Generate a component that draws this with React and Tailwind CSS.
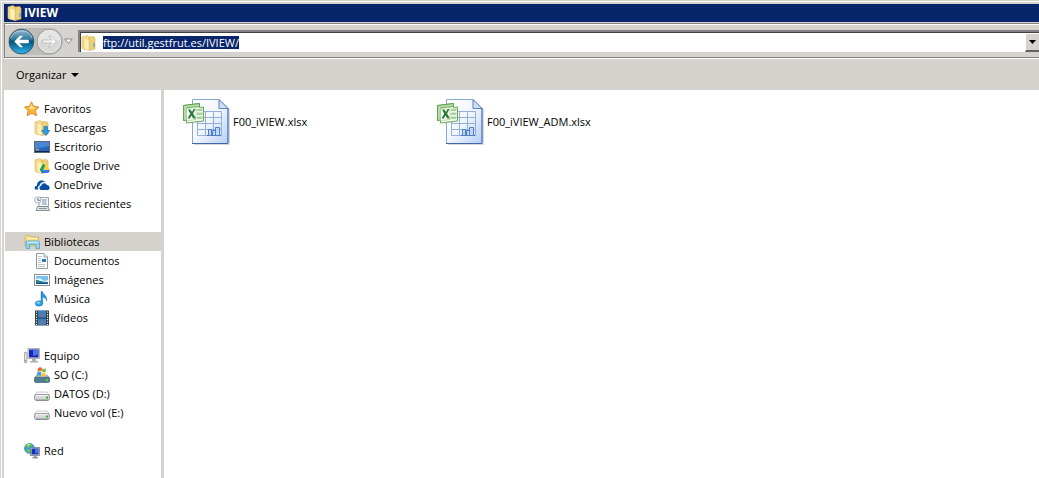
import React, { useEffect, useRef } from 'react'

const FolderShape = () => (
    <>
        <path d="M1 2 L6 .5 L8 2 V15 L2 14 L1 13Z" fill="#f5dd8b" stroke="#d6b966" strokeWidth=".6" />
        <path d="M8 2 L12.500 1.500 L14 3 V14 L8 15.500Z" fill="#ecd078" stroke="#cfae5a" strokeWidth=".6" />
        <path d="M3 3 L8 4.500 V15.500 L3 14Z" fill="#fff0b4" stroke="#dcc274" strokeWidth=".5" />
    </>
)

const FolderIcon = () => (
    <svg viewBox="0 0 16 16" className="h-4 w-4 shrink-0" aria-hidden="true">
        <FolderShape />
        <path d="M12.500 8h1v4h-1z" fill="#3b9be0" />
    </svg>
)

const DriveShape = () => (
    <>
        <path d="M3.500 6 H12.500 Q14 6 15.500 9.500 H.5 Q2 6 3.500 6Z" fill="#fafafa" stroke="#b5b5b5" strokeWidth=".7" />
        <rect x=".5" y="8.500" width="15" height="6" rx="2" fill="#d5d6d6" stroke="#85898a" strokeWidth=".8" />
        <path d="M2 9.700h12" stroke="#f7f7f7" />
        <path d="M2 14h12" stroke="#777b7c" strokeWidth=".8" />
        <rect x="12" y="10.500" width="2" height="2" fill="#2fb52f" />
    </>
)

const drawings = {
    star: (
        <>
            <path d="M7.500 .8 L9.700 5.300 L15 6 L11.300 9.700 L12.600 14.800 L7.800 12.300 L3.200 14.600 L4 9.500 L.6 5.900 L5.600 5.200Z" fill="#fdb338" stroke="#d98322" strokeWidth=".9" />
            <path d="M7.500 2.500 L8.800 6.200 L12 7 L8 8.500 L4 7 L6.300 6.100Z" fill="#ffe68c" />
        </>
    ),
    downloads: (
        <>
            <FolderShape />
            <path d="M10 6.500h3.500v4H16L11.800 15.500L7.500 10.500H10Z" fill="#2f9be4" stroke="#1668ad" strokeWidth=".6" />
        </>
    ),
    desktop: (
        <>
            <rect x=".5" y="2.500" width="15" height="11" fill="#2865bd" stroke="#5d6875" />
            <path d="M1 3h14v4L1 10z" fill="#4a86d6" />
            <path d="M1 12h14v1H1z" fill="#15254b" />
            <path d="M2 10h1.500v1.500H2z" fill="#ee8d35" />
            <path d="M3.500 10H5v1.500H3.500z" fill="#83cc52" />
        </>
    ),
    gdrive: (
        <>
            <FolderShape />
            <path d="M9 6h3L8 14.500L5.500 12Z" fill="#16a05d" />
            <path d="M10 6H12.500L16 12h-3Z" fill="#ffcd31" />
            <path d="M8.500 12H16l-1.500 3H7Z" fill="#3b76e8" />
        </>
    ),
    onedrive: (
        <>
            <path d="M1 12.500C0 10.500 1.200 8.700 3 8.500C3 5.500 5 3.500 7.700 3.500C9 3.400 10.200 4 11 5C8 4.500 6 6 5.500 8.500C3.500 9 3.200 11 4.500 12.500Z" fill="#0b4da2" />
            <path d="M6.500 13C4.500 11 5.500 9 7.200 9C7.300 5.800 11.500 5 13 8C15 8.300 16 10 15.500 11.500C15.200 12.500 14.500 13 13.500 13Z" fill="#0b4da2" />
        </>
    ),
    recent: (
        <>
            <path d="M5 1.500H14.500V10.500H5Z" fill="#f4f7f9" stroke="#8a949b" strokeWidth=".8" />
            <path d="M8 4h5M8 6h4M8 8h5" stroke="#7697b4" />
            <path d="M3.500 10.500H14L15.500 14.500H2Z" fill="#dce1e3" stroke="#737d82" strokeWidth=".8" />
            <path d="M5 12.500h8" stroke="#8d989e" />
            <circle cx="3.800" cy="4" r="3.200" fill="#f3f3f3" stroke="#9aa2a6" strokeWidth=".8" />
            <path d="M3.800 2v2.300H6" fill="none" stroke="#445" strokeWidth=".7" />
        </>
    ),
    library: (
        <>
            <path d="M1 3L2 1.500H6L7 3H14.500V12H1Z" fill="#f5dd83" stroke="#cfab4d" strokeWidth=".7" />
            <path d="M3 4.500h10.500" stroke="#fff5be" />
            <path d="M2 8Q2 7 3 7H14.500Q15.500 7 15.500 8V14.500H12V10.500H5.500V14.500H2Z" fill="#92d4f0" stroke="#4d9fc9" strokeWidth=".8" />
            <path d="M3 8.200h11.500" stroke="#d9f4fc" />
        </>
    ),
    documents: (
        <>
            <path d="M2.500 .5H10L13.500 4V15.500H2.500Z" fill="#fff" stroke="#858e94" strokeWidth=".9" />
            <path d="M10 .5V4h3.500" fill="#dce4e8" stroke="#858e94" strokeWidth=".7" />
            <path d="M4 3.500h4M4 5.500h3M4 7.500h3M4 9.500h3M4 11.500h7M4 13.500h7" stroke="#a9b6bf" strokeWidth=".8" />
            <path d="M8 6h4v3H8z" fill="#2878bc" />
        </>
    ),
    pictures: (
        <>
            <rect x=".5" y="2.500" width="15" height="11" fill="#fff" stroke="#8b8f91" />
            <path d="M2 4h12v8H2z" fill="#77bfec" />
            <path d="M2 7l4-1l4 3l4-1v4H2z" fill="#dff2f2" />
            <path d="M2 8c3 0 5 2 12 2v2H2z" fill="#257c87" />
            <path d="M2 11h12v1H2z" fill="#1b4f9a" />
        </>
    ),
    music: (
        <>
            <path d="M7 .5H8.500C9 4 14 4.500 12.500 10C12 7.500 10.500 6.500 8.700 6V12.500H7Z" fill="#2b91db" stroke="#1971b3" strokeWidth=".4" />
            <ellipse cx="5" cy="12.500" rx="3.800" ry="2.700" fill="#329ee5" stroke="#1971b3" strokeWidth=".5" />
            <ellipse cx="4.300" cy="11.700" rx="1.700" ry=".9" fill="#9adcfa" />
        </>
    ),
    videos: (
        <>
            <path d="M1 .5h14v15H1z" fill="#30383c" />
            <path d="M4 1h8v6.500H4zM4 8.500h8V15H4z" fill="#3283cf" />
            <path d="M6 3l4 1l-1 2l-3 1zM6 10l3 1l1 3H7z" fill="#8d6a78" />
            <path d="M2.500 1.500V15M13.500 1.500V15" stroke="#eee" strokeWidth="1.200" strokeDasharray="1.200 1.300" />
        </>
    ),
    computer: (
        <>
            <path d="M.5 4.500h2.500v10H.5z" fill="#e4e4e4" stroke="#8c8c8c" strokeWidth=".7" />
            <path d="M1 12h1v1H1z" fill="#2fae35" />
            <rect x="4" y=".5" width="11.500" height="10" fill="#e1e1db" stroke="#999" strokeWidth=".7" />
            <path d="M5 1.500h9.500v8H5z" fill="#1828b8" />
            <path d="M9 1.500h5.500v5L9 8z" fill="#556fe5" />
            <path d="M8 11h4v2h2v1.500H6V13h2z" fill="#adb2b6" />
        </>
    ),
    system: (
        <>
            <path d="M3 8H13L15.500 11H.5Z" fill="#d6dfe2" stroke="#777" strokeWidth=".6" />
            <rect x=".5" y="10" width="15" height="5.500" rx="1.500" fill="#527d90" stroke="#3f6170" strokeWidth=".7" />
            <path d="M12 12h2v2h-2z" fill="#49d349" />
            <path d="M4 1.500Q6-.5 8 1L7.500 4.500Q5.500 3.500 3.500 5Z" fill="#ed6231" />
            <path d="M8.500 1.200Q10 2.500 12 1.500L11.500 5Q9.500 6 8 4.600Z" fill="#73bd43" />
            <path d="M3.300 5.500Q5.500 4 7.500 5.300L6.500 9Q5 7.500 2.500 8.800Z" fill="#3d9de8" />
            <path d="M7.900 5.500Q9.500 6.500 11.500 5.700L10.700 9Q8.500 10 7 9Z" fill="#f7c735" />
        </>
    ),
    drive: <DriveShape />,
    network: (
        <>
            <circle cx="5.500" cy="5.500" r="5" fill="#359ee0" stroke="#237bb1" strokeWidth=".6" />
            <path d="M2 2.500Q5-.5 8 1L6 4L4 5L2 4ZM1 7l4-1l2 2l-2 2.500z" fill="#69c846" />
            <path d="M3 2l3-.5" stroke="#d5f5ba" />
            <rect x="6.500" y="4.500" width="9" height="8" fill="#ddddd6" stroke="#747d84" strokeWidth=".8" />
            <path d="M7.500 5.500h7v6h-7z" fill="#1530b8" />
            <path d="M11 5.500h3.500v4l-3.500 1z" fill="#4b6ee4" />
            <path d="M10 13h2.500v1H14v1.500H8.500V14H10z" fill="#8898a5" />
        </>
    ),
}

const groups = [
    {
        name: 'Favoritos',
        icon: 'star',
        items: [
            { name: 'Descargas', icon: 'downloads' },
            { name: 'Escritorio', icon: 'desktop' },
            { name: 'Google Drive', icon: 'gdrive' },
            { name: 'OneDrive', icon: 'onedrive' },
            { name: 'Sitios recientes', icon: 'recent' },
        ],
    },
    {
        name: 'Bibliotecas',
        icon: 'library',
        selected: true,
        items: [
            { name: 'Documentos', icon: 'documents' },
            { name: 'Imágenes', icon: 'pictures' },
            { name: 'Música', icon: 'music' },
            { name: 'Vídeos', icon: 'videos' },
        ],
    },
    {
        name: 'Equipo',
        icon: 'computer',
        items: [
            { name: 'SO (C:)', icon: 'system' },
            { name: 'DATOS (D:)', icon: 'drive' },
            { name: 'Nuevo vol (E:)', icon: 'drive' },
        ],
    },
    { name: 'Red', icon: 'network', items: [] },
]

const files = ['F00_iVIEW.xlsx', 'F00_iVIEW_ADM.xlsx']

const NavLink = ({ item, nested }) => (
    <a
        href="#"
        className={`flex h-[19px] items-center gap-1 whitespace-nowrap ${nested ? 'pl-[29px]' : 'pl-[19px]'} ${item.selected ? 'bg-[#d6d3ce]' : ''}`}
    >
        <svg viewBox="0 0 16 16" className="h-4 w-4 shrink-0" aria-hidden="true">
            {drawings[item.icon]}
        </svg>
        <span>{item.name}</span>
    </a>
)

const ExcelIcon = () => (
    <svg viewBox="0 0 48 48" className="h-12 w-12 shrink-0" aria-hidden="true">
        <defs>
            <linearGradient id="sheet" x1="0" y1="0" x2="1" y2="1">
                <stop offset="0" stopColor="#ffffff" />
                <stop offset=".5" stopColor="#f1f6fe" />
                <stop offset="1" stopColor="#b6cef5" />
            </linearGradient>
        </defs>
        <path d="M12 46.500H47.500V11" fill="none" stroke="#d5dae2" />
        <path d="M10.500 1.500H37L46 10.500V45.500H10.500Z" fill="url(#sheet)" stroke="#8ca6d6" />
        <path d="M10 45.500H46V10" fill="none" stroke="#4266ad" />
        <path d="M37 1.500V10.500H46Z" fill="#d0e1fb" stroke="#5d7fbb" />
        <path d="M15.500 13.500h24v24h-24zM15.500 19.500h24M15.500 25.500h24M15.500 31.500h24M23.500 13.500v24M31.500 13.500v24" fill="none" stroke="#93afdc" />
        <path d="M25 37.500h14" stroke="#3c66af" />
        <path d="M26.500 31.500h3v6h-3zM30.500 32.500h3v5h-3zM33.500 29.500h4v8h-4z" fill="#c0d7fc" stroke="#5380c3" />
        <path d="M1.500 7.500L17.500 5.500V9.500L21.500 9V23L4.500 25V22L1.500 22.500Z" fill="#f4faf0" stroke="#67a759" />
        <path d="M1.500 7.500L17.500 5.500V8.500L4.500 10V22L1.500 22.500Z" fill="#b5dba6" stroke="#559b48" strokeWidth=".8" />
        <path d="M4.500 10.500L14 9.500V21.500L4.500 22.500Z" fill="#fff" stroke="#9cc890" strokeWidth=".7" />
        <path d="M15 11L20.500 10.500V13H15ZM15 14.500H20.500V17H15ZM15 18.500H20.500V21H15Z" fill="#a9d19d" />
        <path d="M6 11.500h2.500l1.500 2.500L11.500 11H13.500l-2.400 4.500l2.900 5h-2.800L9.500 17.500L7.800 20.500H5.500L8.200 15.800Z" fill="#297c32" />
    </svg>
)

const BackIcon = () => (
    <svg viewBox="0 0 27 27" className="h-[27px] w-[27px]" aria-hidden="true">
        <defs>
            <linearGradient id="back" x1="0" y1="0" x2="0" y2="1">
                <stop offset="0" stopColor="#9abacc" />
                <stop offset=".4" stopColor="#327d9f" />
                <stop offset=".5" stopColor="#03527b" />
                <stop offset="1" stopColor="#32baf1" />
            </linearGradient>
        </defs>
        <circle cx="13.500" cy="13.500" r="12.300" fill="url(#back)" stroke="#35566b" />
        <path d="M3 10Q5 3 13.500 3Q22 3 24 10" fill="none" stroke="#c5dce7" strokeOpacity=".6" />
        <path d="M6.500 13.500L12 8H14.500L11 12H20.500V15H11L14.500 19H12Z" fill="#fff" stroke="#fff" strokeWidth=".5" />
    </svg>
)

const ForwardIcon = () => (
    <svg viewBox="0 0 27 27" className="h-[27px] w-[27px]" aria-hidden="true">
        <circle cx="13.500" cy="13.500" r="12.300" fill="#d8d8d7" stroke="#999a9d" />
        <path d="M2.500 13A11 11 0 0 1 24.500 13Q13 10 2.500 13Z" fill="#e5e5e4" />
        <circle cx="13.500" cy="13.500" r="11.200" fill="none" stroke="#e9e9e9" />
        <path d="M20.500 13.500L15 8H12.500L16 12H6.500V15H16L12.500 19H15Z" fill="#f5f5f5" stroke="#b5b6b7" strokeWidth=".8" />
    </svg>
)

export default function App() {
    const addressRef = useRef(null)

    useEffect(() => {
        addressRef.current.focus()
        addressRef.current.select()
    }, [])

    return (
        <div className="flex min-h-screen flex-col bg-[#d6d3ce] pt-px font-['Open_Sans','Noto_Sans',sans-serif] text-[11px] leading-[13px] text-black">
            <div className="flex flex-1 flex-col border-t border-white pl-px">
                <div className="flex flex-1 flex-col border-l border-white pt-0.5 pl-0.5">
                    <header className="flex h-[18px] items-center gap-px bg-[#08246b] pl-[3px] text-white">
                        <FolderIcon />
                        <h1 className="text-xs font-bold">IVIEW</h1>
                    </header>

                    <div className="mt-px flex h-[35px] border-t border-b border-l border-[#848284]">
                        <div className="flex flex-1 border-t border-white py-[5px] pl-[3px]">
                            <nav className="-mt-0.5 flex h-[27px] shrink-0 items-center" aria-label="Historial">
                                <div className="flex gap-px rounded-full bg-[#bdbcbb]">
                                    <button aria-label="Atrás"><BackIcon /></button>
                                    <button aria-label="Adelante"><ForwardIcon /></button>
                                </div>
                                <button aria-label="Páginas recientes" className="ml-px">
                                    <svg viewBox="0 0 9 7" className="h-[7px] w-[9px]" aria-hidden="true">
                                        <path d="M.8 1H8.200L4.500 5.500Z" fill="#f8f8f8" stroke="#777" strokeWidth=".8" />
                                    </svg>
                                </button>
                            </nav>
                            <div className="ml-[5px] flex flex-1 border-t-2 border-l-2 border-[#848284]">
                                <div className="flex flex-1 items-center border-t border-l border-[#424142] bg-white">
                                    <FolderIcon />
                                    <input
                                        ref={addressRef}
                                        aria-label="Dirección"
                                        defaultValue="ftp://util.gestfrut.es/IVIEW/"
                                        className="ml-1.5 min-w-0 flex-1 bg-white text-[11px] leading-[13px] caret-transparent outline-none selection:bg-[#08246bfe] selection:text-white"
                                    />
                                    <button aria-label="Direcciones anteriores" className="flex h-full w-3.5 items-center justify-center border-t border-b-2 border-l border-t-white border-b-[#636163] border-l-white bg-[#d6d3ce]">
                                        <svg viewBox="0 0 7 4" className="h-1 w-[7px]" aria-hidden="true"><path d="M0 0H7L3.500 4Z" /></svg>
                                    </button>
                                </div>
                            </div>
                        </div>
                    </div>

                    <div className="flex h-8 items-center border-t border-white pl-3">
                        <button className="flex items-center gap-[5px]">
                            <span>Organizar</span>
                            <svg viewBox="0 0 8 4" className="h-1 w-2" aria-hidden="true"><path d="M0 0H8L4 4Z" /></svg>
                        </button>
                    </div>

                    <div className="flex flex-1 bg-white">
                        <nav className="flex w-[160px] shrink-0 flex-col gap-[19px] border-r-[3px] border-[#d6d3ce] pt-[9px] pl-px" aria-label="Carpetas">
                            {groups.map((group) => (
                                <div key={group.name}>
                                    <NavLink item={group} />
                                    {group.items.map((item) => (
                                        <NavLink key={item.name} item={item} nested />
                                    ))}
                                </div>
                            ))}
                        </nav>
                        <main className="flex flex-1 flex-wrap content-start items-start pt-2 pl-[18px]">
                            {files.map((file) => (
                                <button key={file} className="flex w-[254px] items-center gap-[3px] text-left">
                                    <ExcelIcon />
                                    <span className="pb-0.5">{file}</span>
                                </button>
                            ))}
                        </main>
                    </div>
                </div>
            </div>
        </div>
    )
}
